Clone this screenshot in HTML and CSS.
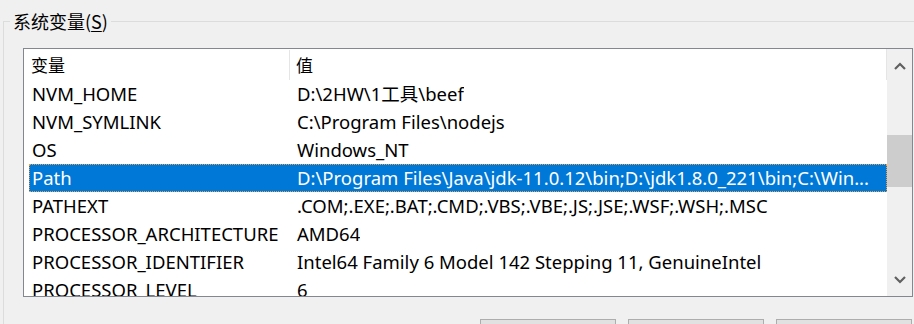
FILE: index.html
```html
<!DOCTYPE html>
<html lang="zh-CN">
    <head>
        <meta charset="UTF-8">
        <title>系统变量</title>
        <link rel="stylesheet" href="styles.css">
    </head>
    <body>
        <div class="group">
            <span class="group-title">系统变量(<u>S</u>)</span>

            <div class="listbox">
                <div class="list">
                    <div class="header">
                        <div class="col1">变量</div>
                        <div class="col2">值</div>
                    </div>
                    <div class="rows">
                        <div class="row"><div class="col1">NVM_HOME</div><div class="col2">D:\2HW\1工具\beef</div></div>
                        <div class="row"><div class="col1">NVM_SYMLINK</div><div class="col2">C:\Program Files\nodejs</div></div>
                        <div class="row"><div class="col1">OS</div><div class="col2">Windows_NT</div></div>
                        <div class="row selected"><div class="col1">Path</div><div class="col2">D:\Program Files\Java\jdk-11.0.12\bin;D:\jdk1.8.0_221\bin;C:\Win...</div></div>
                        <div class="row"><div class="col1">PATHEXT</div><div class="col2">.COM;.EXE;.BAT;.CMD;.VBS;.VBE;.JS;.JSE;.WSF;.WSH;.MSC</div></div>
                        <div class="row"><div class="col1">PROCESSOR_ARCHITECTURE</div><div class="col2">AMD64</div></div>
                        <div class="row"><div class="col1">PROCESSOR_IDENTIFIER</div><div class="col2">Intel64 Family 6 Model 142 Stepping 11, GenuineIntel</div></div>
                        <div class="row"><div class="col1">PROCESSOR_LEVEL</div><div class="col2">6</div></div>
                    </div>
                </div>

                <div class="scrollbar">
                    <div class="arrow">
                        <svg width="12" height="8" viewBox="0 0 12 8"><polyline points="1,7 6,2 11,7" fill="none" stroke="#606060" stroke-width="2.2"/></svg>
                    </div>
                    <div class="track">
                        <div class="thumb"></div>
                    </div>
                    <div class="arrow">
                        <svg width="12" height="8" viewBox="0 0 12 8"><polyline points="1,1 6,6 11,1" fill="none" stroke="#606060" stroke-width="2.2"/></svg>
                    </div>
                </div>
            </div>

            <div class="buttons">
                <button class="btn"></button>
                <button class="btn"></button>
                <button class="btn"></button>
            </div>
        </div>
    </body>
</html>
```

FILE: styles.css
```css
body{
    margin: 0;
    background: #f0f0f0;
    font-family: "Noto Sans", "Noto Sans CJK SC", sans-serif;
    font-size: 18.5px;
    color: #000;
    overflow: hidden;
}

.group{
    position: relative;
    margin: 21px 0 0 3px;
    border-top: 1px solid #dcdcdc;
    border-left: 1px solid #dcdcdc;
    padding: 26px 1px 0 19px;
    height: 400px;
}

.group-title{
    position: absolute;
    left: 6px;
    top: -12px;
    padding: 0 3px;
    background: #f0f0f0;
    font-family: "Noto Sans CJK SC", sans-serif;
    font-size: 18px;
    line-height: 22px;
    color: #000;
}

.group-title u{
    text-underline-offset: 2px;
}

.listbox{
    display: flex;
    width: 888px;
    height: 247px;
    border: 1px solid #828790;
    background: #fff;
}

.list{
    flex: 1;
    display: flex;
    flex-direction: column;
    overflow: hidden;
}

.header{
    display: flex;
    height: 31px;
    width: 862px;
    border-right: 1px solid #e5e5e5;
    align-items: center;
    font-family: "Noto Sans CJK SC", sans-serif;
    font-size: 17px;
}

.header .col1{
    width: 258px;
    padding-left: 7px;
    height: 30px;
    line-height: 30px;
    border-right: 1px solid #e5e5e5;
}

.header .col2{
    padding-left: 6px;
    line-height: 30px;
}

.rows{
    flex: 1;
    overflow: hidden;
    padding-left: 5px;
}

.row{
    display: flex;
    height: 28px;
    line-height: 28px;
    white-space: nowrap;
    box-sizing: border-box;
}

.row .col1{
    width: 258px;
    padding-left: 3px;
    flex: none;
}

.row .col2{
    padding-left: 7px;
    overflow: hidden;
}

.selected{
    background: #0078d7;
    color: #fff;
    outline: 1px dotted #f0a040;
    outline-offset: -1px;
}

.scrollbar{
    width: 25px;
    flex: none;
    display: flex;
    flex-direction: column;
    background: #f0f0f0;
}

.arrow{
    height: 33px;
    display: flex;
    align-items: center;
    justify-content: center;
}

.track{
    flex: 1;
    padding-top: 53px;
}

.thumb{
    height: 52px;
    background: #cdcdcd;
}

.buttons{
    display: flex;
    justify-content: flex-end;
    gap: 12px;
    margin-top: 22px;
    padding-right: 1px;
}

.btn{
    width: 136px;
    height: 30px;
    background: #e1e1e1;
    border: 1px solid #adadad;
    padding: 0;
}
```
